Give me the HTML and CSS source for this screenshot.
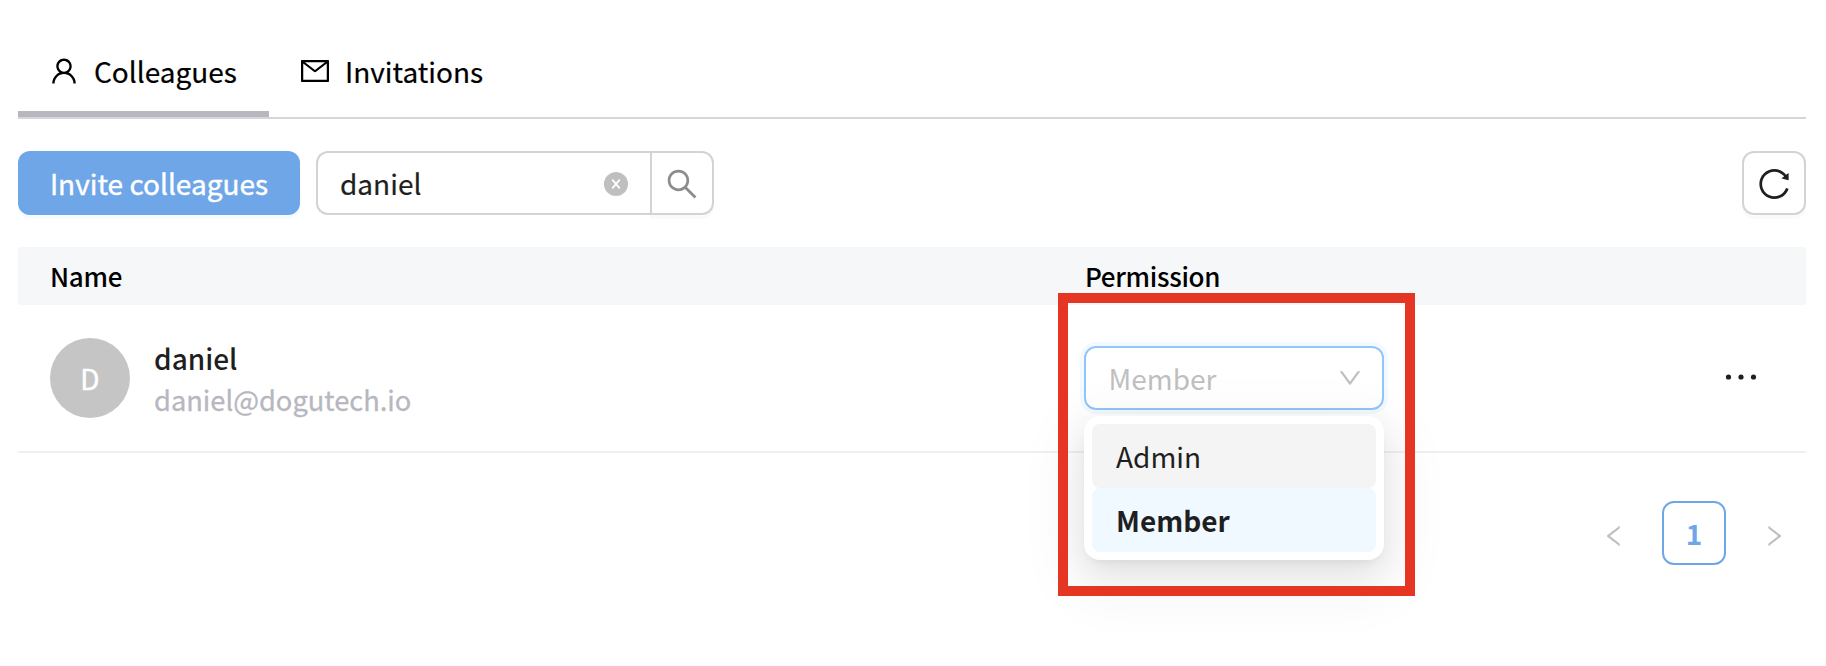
FILE: index.html
```html
<!DOCTYPE html>
<html lang="en">
<head>
<meta charset="utf-8">
<title>Colleagues</title>
<link rel="stylesheet" href="styles.css">
</head>
<body>
<main class="page">
  <nav class="tabs">
    <a class="tab tab-active">
      <svg class="icon" viewBox="64 64 896 896"><path d="M858.5 763.6a374 374 0 00-80.6-119.5 375.63 375.63 0 00-119.5-80.6c-.4-.2-.8-.3-1.2-.5C719.5 518 760 444.7 760 362c0-137-111-248-248-248S264 225 264 362c0 82.7 40.5 156 102.8 201.1-.4.2-.8.3-1.2.5-44.8 18.9-85 46-119.5 80.6a375.63 375.63 0 00-80.6 119.5A371.7 371.7 0 00136 901.8a8 8 0 008 8.2h60c4.4 0 7.9-3.5 8-7.8 2-77.2 33-149.5 87.8-204.3 56.7-56.7 132-87.9 212.2-87.9s155.5 31.2 212.2 87.9C779 752.7 810 825 812 902.2c.1 4.4 3.6 7.8 8 7.8h60a8 8 0 008-8.2c-1-47.8-10.9-94.3-29.5-138.2zM512 534c-45.9 0-89.1-17.9-121.6-50.4S340 407.9 340 362c0-45.9 17.9-89.1 50.4-121.6S466.1 190 512 190s89.1 17.9 121.6 50.4S684 316.1 684 362c0 45.9-17.9 89.1-50.4 121.6S557.9 534 512 534z"/></svg>
      <span>Colleagues</span>
    </a>
    <a class="tab">
      <svg class="icon" viewBox="64 64 896 896"><path d="M928 160H96c-17.7 0-32 14.3-32 32v640c0 17.7 14.3 32 32 32h832c17.7 0 32-14.3 32-32V192c0-17.7-14.3-32-32-32zm-40 110.8V792H136V270.8l-27.6-21.5 39.3-50.5 42.8 33.3h643.1l42.8-33.3 39.3 50.5-27.7 21.5zM833.6 232L512 482 190.4 232l-42.8-33.3-39.3 50.5 27.6 21.5 341.6 265.6a55.99 55.99 0 0068.7 0L888 270.8l27.6-21.5-39.3-50.5-42.7 33.2z"/></svg>
      <span>Invitations</span>
    </a>
  </nav>

  <div class="toolbar">
    <div class="toolbar-left">
      <button class="btn-primary">Invite colleagues</button>
      <div class="search">
        <div class="search-field">
          <span>daniel</span>
          <svg class="icon-clear" viewBox="0 0 24 24"><circle cx="12" cy="12" r="12" fill="#bfbfbf"/><path d="M8.3 7.6L15.7 16.4M15.7 7.6L8.3 16.4" stroke="#fff" stroke-width="1.8"/></svg>
        </div>
        <button class="search-btn">
          <svg class="icon-lg" viewBox="64 64 896 896"><path d="M909.6 854.5L649.9 594.8C690.2 542.7 712 479 712 412c0-80.2-31.3-155.4-87.9-212.1-56.6-56.7-132-87.9-212.1-87.9s-155.5 31.3-212.1 87.9C143.2 256.5 112 331.8 112 412c0 80.1 31.3 155.5 87.9 212.1C256.5 680.8 331.8 712 412 712c67 0 130.6-21.8 182.7-62l259.7 259.6a8.2 8.2 0 0011.6 0l43.6-43.5a8.2 8.2 0 000-11.6zM570.4 570.4C528 612.7 471.8 636 412 636s-116-23.3-158.4-65.6C211.3 528 188 471.8 188 412s23.3-116.1 65.6-158.4C296 211.3 352.2 188 412 188s116.1 23.2 158.4 65.6S636 352.2 636 412s-23.3 116.1-65.6 158.4z"/></svg>
        </button>
      </div>
    </div>
    <button class="btn-reload">
      <svg class="icon-lg" viewBox="64 64 896 896"><path d="M909.1 209.3l-56.4 44.1C775.8 155.1 656.2 92 521.9 92 290 92 102.3 279.5 102 511.5 101.7 743.7 289.8 932 521.9 932c181.3 0 335.8-115 394.6-276.1 1.5-4.2-.7-8.9-4.9-10.3l-56.7-19.5a8 8 0 00-10.1 4.8c-1.8 5-3.8 10-5.9 14.9-17.3 41-42.1 77.8-73.7 109.4A344.77 344.77 0 01655.9 829c-42.3 17.9-87.4 27-133.8 27-46.5 0-91.5-9.1-133.8-27A341.5 341.5 0 01279 755.2a342.16 342.16 0 01-73.7-109.4c-17.9-42.4-27-87.4-27-133.9s9.1-91.5 27-133.9c17.3-41 42.1-77.8 73.7-109.4 31.6-31.6 68.4-56.4 109.3-73.8 42.3-17.9 87.4-27 133.8-27 46.5 0 91.5 9.1 133.8 27a341.5 341.5 0 01109.3 73.8c9.9 9.9 19.2 20.4 27.8 31.4l-60.2 47a8 8 0 003 14.1l175.6 43c5 1.2 9.9-2.6 9.9-7.7l.8-180.9c-.1-6.6-7.8-10.3-13-6.2z"/></svg>
    </button>
  </div>

  <section class="table">
    <div class="row row-head">
      <div>Name</div>
      <div class="head-permission">Permission</div>
      <div></div>
    </div>
    <div class="row row-body">
      <div class="user">
        <div class="avatar">D</div>
        <div class="user-text">
          <div class="user-name">daniel</div>
          <div class="user-mail">daniel@dogutech.io</div>
        </div>
      </div>
      <div class="permission">
        <div class="select">
          <span>Member</span>
          <svg class="icon-sm" viewBox="64 64 896 896"><path d="M884 256h-75c-5.1 0-9.9 2.5-12.9 6.6L512 654.2 227.9 262.6c-3-4.1-7.8-6.6-12.9-6.6h-75c-6.5 0-10.3 7.4-6.5 12.7l352.6 486.1c12.8 17.6 39 17.6 51.7 0l352.6-486.1c3.9-5.3.1-12.7-6.4-12.7z"/></svg>
        </div>
        <div class="dropdown">
          <div class="option option-hover">Admin</div>
          <div class="option option-selected">Member</div>
        </div>
        <div class="highlight"></div>
      </div>
      <div class="more">
        <svg class="icon-more" viewBox="0 0 32 8"><circle cx="3.5" cy="4" r="2.6"/><circle cx="16" cy="4" r="2.6"/><circle cx="28.5" cy="4" r="2.6"/></svg>
      </div>
    </div>
  </section>

  <div class="pagination">
    <div class="page-arrow"><svg class="icon-sm" viewBox="64 64 896 896"><path d="M724 218.3V141c0-6.7-7.7-10.4-12.9-6.3L260.3 486.8a31.86 31.86 0 000 50.3l450.8 352.1c5.3 4.1 12.9.4 12.9-6.3v-77.3c0-4.9-2.3-9.6-6.1-12.6l-360-281 360-281.1c3.8-3 6.1-7.7 6.1-12.6z"/></svg></div>
    <div class="page-current">1</div>
    <div class="page-arrow"><svg class="icon-sm" viewBox="64 64 896 896"><path d="M765.7 486.8L314.9 134.7A7.97 7.97 0 00302 141v77.3c0 4.9 2.3 9.6 6.1 12.6l360 281.1-360 281.1c-3.9 3-6.1 7.7-6.1 12.6V883c0 6.7 7.7 10.4 12.9 6.3l450.8-352.1a31.96 31.96 0 000-50.4z"/></svg></div>
  </div>
</main>
</body>
</html>
```
FILE: styles.css
```css
* { box-sizing: border-box; }
body {
  margin: 0;
  background: #fff;
  color: #1f1f1f;
  font-family: "Noto Sans CJK KR", "Noto Sans", sans-serif;
  font-size: 28px;
  line-height: 44px;
}
button {
  margin: 0;
  padding: 0;
  font: inherit;
  display: flex;
  align-items: center;
  justify-content: center;
}
svg { display: block; flex: none; fill: currentColor; }
.page { min-height: 666px; padding: 25px 20px 0 18px; }
.icon { width: 28px; height: 28px; }
.icon-lg { width: 32px; height: 32px; }
.icon-sm { width: 24px; height: 24px; }

.tabs {
  display: flex;
  height: 94px;
  border-bottom: 2px solid #d5d5dc;
  color: #000;
  -webkit-text-stroke: 0.2px currentColor;
}
.tab {
  display: flex;
  align-items: center;
  gap: 16px;
  padding: 6px 32px 0;
  border-bottom: 6px solid transparent;
}
.tab-active { border-bottom-color: #b7b7bf; }

.toolbar {
  display: flex;
  justify-content: space-between;
  margin-top: 32px;
}
.toolbar-left { display: flex; gap: 16px; }
.btn-primary {
  width: 282px;
  height: 64px;
  border: 0;
  border-radius: 12px;
  background: #6fa6e7;
  color: #fff;
  -webkit-text-stroke: 0.4px #fff;
  box-shadow: 0 4px 0 rgba(5, 145, 255, 0.04);
}
.search { display: flex; width: 398px; height: 64px; }
.search-field {
  flex: 1;
  display: flex;
  align-items: center;
  justify-content: space-between;
  padding: 0 22px;
  border: 2px solid #d3d3d3;
  border-right: 0;
  border-radius: 12px 0 0 12px;
  -webkit-text-stroke: 0.2px currentColor;
}
.icon-clear { width: 24px; height: 24px; margin-top: 2px; }
.search-btn, .btn-reload {
  width: 64px;
  height: 64px;
  padding-top: 2px;
  border: 2px solid #d3d3d3;
  background: #fff;
  box-shadow: 0 4px 0 rgba(0, 0, 0, 0.02);
}
.search-btn { border-radius: 0 12px 12px 0; color: #8c8c8c; }
.btn-reload { border-radius: 12px; color: #1f1f1f; }

.table { margin-top: 32px; }
.row {
  display: grid;
  grid-template-columns: 1034px 1fr 124px;
  align-items: center;
  padding-left: 32px;
}
.row-head {
  height: 58px;
  background: #f6f7f9;
  color: #000;
  font-size: 26px;
  font-weight: 500;
  letter-spacing: -0.3px;
}
.head-permission { padding-left: 1px; }
.row-body { height: 148px; border-bottom: 2px solid #f0f0f0; }
.user { display: flex; align-items: center; gap: 24px; }
.avatar {
  display: flex;
  align-items: center;
  justify-content: center;
  width: 80px;
  height: 80px;
  border-radius: 50%;
  background: #c5c5c5;
  color: #fff;
  -webkit-text-stroke: 0.4px #fff;
}
.user-text { padding-top: 1px; line-height: 41px; }
.user-name { padding-top: 1px; font-weight: 500; }
.user-mail {
  color: #b7b7bf;
  font-size: 27.25px;
  -webkit-text-stroke: 0.3px #b7b7bf;
}

.permission { position: relative; width: 300px; }
.select {
  display: flex;
  align-items: center;
  justify-content: space-between;
  height: 64px;
  padding: 0 20px 0 22.5px;
  border: 2px solid #94c5f8;
  border-radius: 12px;
  box-shadow: 0 0 0 4px rgba(5, 145, 255, 0.05);
  color: #bfbfbf;
}
.dropdown {
  position: absolute;
  top: 70px;
  left: 0;
  width: 300px;
  padding: 8px;
  border-radius: 16px;
  background: #fff;
  box-shadow: 0 12px 32px 0 rgba(0, 0, 0, 0.08), 0 6px 12px -8px rgba(0, 0, 0, 0.12), 0 18px 56px 16px rgba(0, 0, 0, 0.05);
}
.option { padding: 10px 24px; border-radius: 8px; }
.option-hover { background: #f4f4f4; }
.option-selected { background: #f0f9ff; font-weight: 700; }
.highlight {
  position: absolute;
  top: -53px;
  left: -26px;
  width: 357px;
  height: 303px;
  border: 10px solid #e43622;
}
.more { display: flex; justify-content: center; padding: 0 6px 3px 0; }
.icon-more { width: 32px; height: 8px; }

.pagination {
  display: flex;
  justify-content: flex-end;
  gap: 16px;
  margin-top: 48px;
}
.page-arrow, .page-current {
  display: flex;
  align-items: center;
  justify-content: center;
  width: 64px;
  height: 64px;
}
.page-arrow { padding-top: 6px; color: #bfbfbf; }
.page-current {
  border: 2px solid #6fa6e7;
  border-radius: 12px;
  color: #6fa6e7;
  font-weight: 700;
}
```
